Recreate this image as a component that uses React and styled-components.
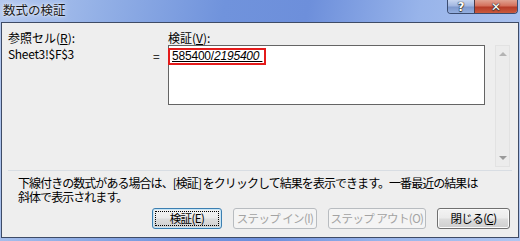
import React from "react";
import styled, { createGlobalStyle } from "styled-components";

const GlobalStyle = createGlobalStyle`
  html, body {
    margin: 0;
    padding: 0;
    width: 520px;
    height: 241px;
    overflow: hidden;
    background: #7f9fd9;
  }
  * { box-sizing: border-box; }
`;

const font = `"Noto Sans CJK JP", "Noto Sans", sans-serif`;

const Frame = styled.div`
  width: 520px;
  height: 241px;
  display: flex;
  flex-direction: column;
  padding: 0 1px 3px 1px;
  background: linear-gradient(100deg, #b3c8ef 0%, #93b0e6 18%, #7093dc 40%, #6d8fdb 55%, #98b4ea 75%, #b0c6f0 100%);
  font-family: ${font};
  font-size: 12px;
  color: #000;
`;

const TitleBar = styled.div`
  height: 22px;
  display: flex;
  align-items: flex-start;
  justify-content: space-between;
`;

const Title = styled.div`
  padding: 2px 0 0 2px;
  font-size: 12.5px;
  line-height: 16px;
  color: #1b1b1b;
  text-shadow: 0 0 6px rgba(255, 255, 255, 0.9), 0 0 2px rgba(255, 255, 255, 0.9);
`;

const Caption = styled.div`
  display: flex;
  margin-right: 1px;
  height: 14px;
  border: 1px solid #3b4c70;
  border-top: none;
  border-radius: 0 0 4px 4px;
  overflow: hidden;
`;

const CapButton = styled.div`
  width: ${p => p.$w}px;
  display: flex;
  align-items: center;
  justify-content: center;
  color: #fff;
  font-family: "DejaVu Sans", sans-serif;
  font-weight: bold;
  font-size: 12px;
  line-height: 1;
  text-shadow: 0 0 1px #222, 0 0 1px #222, 0 1px 1px #333;
  background: ${p => p.$red
    ? "linear-gradient(#e0a292 0%, #d4705c 45%, #b63b28 55%, #c95a3e 100%)"
    : "linear-gradient(#c8d6f0 0%, #a2b7e1 45%, #7f99cd 55%, #93afe0 100%)"};
  border-left: ${p => p.$red ? "1px solid #4a3a48" : "none"};
`;

const Client = styled.div`
  flex: 1;
  background: #eeeeee;
  border: 1px solid #3e4b66;
  display: flex;
  flex-direction: column;
`;

const Top = styled.div`
  display: flex;
  padding: 7px 0 0 6px;
  height: 147px;
`;

const Column = styled.div`
  width: ${p => p.$w}px;
  display: flex;
  flex-direction: column;
`;

const Label = styled.div`
  line-height: 15px;
  height: 15px;
  white-space: nowrap;
`;

const Key = styled.span`
  text-decoration: underline;
  text-underline-offset: 1px;
`;

const Ref = styled.div`
  padding-top: 2px;
  line-height: 13px;
  letter-spacing: -0.3px;
`;

const Eq = styled.div`
  padding-top: 4px;
  line-height: 13px;
`;

const Box = styled.div`
  height: 60px;
  background: #fff;
  border: 1px solid #646464;
`;

const Highlight = styled.div`
  display: inline-flex;
  margin: -1px 0 0 -1px;
  height: 17px;
  padding: 0 2px 0 2px;
  border: 2px solid #e41b1b;
  line-height: 13px;
  font-family: "Liberation Sans", sans-serif;
  font-size: 12px;
  letter-spacing: -0.2px;
  text-decoration: underline;
`;

const Italic = styled.span`
  font-style: italic;
  white-space: pre;
`;

const Scroll = styled.div`
  margin: 15px 0 0 10px;
  width: 15px;
  height: 122px;
  border: 1px solid #e2e2e2;
  background: #ececec;
  display: flex;
  flex-direction: column;
  justify-content: space-between;
  align-items: center;
  padding: 6px 0 6px;
`;

const Arrow = styled.div`
  width: 0;
  height: 0;
  border-left: 4px solid transparent;
  border-right: 4px solid transparent;
  ${p => p.$down ? "border-top: 4px solid #9a9a9a;" : "border-bottom: 4px solid #b4b4b4;"}
`;

const Separator = styled.div`
  margin: 0 6px 0 6px;
  height: 1px;
  background: #d8dde3;
`;

const Info = styled.div`
  padding: 5px 0 0 16px;
  line-height: 14px;
  letter-spacing: -0.95px;
  white-space: nowrap;
`;

const ButtonRow = styled.div`
  display: flex;
  gap: 11px;
  padding: 4px 0 0 150px;
`;

const Button = styled.div`
  width: ${p => p.$w}px;
  height: 21px;
  border-radius: 3px;
  display: flex;
  align-items: center;
  justify-content: center;
  line-height: 1;
  font-size: 11.5px;
  white-space: nowrap;
  letter-spacing: -0.6px;
  border: 1px solid ${p => p.$disabled ? "#b8bcc0" : p.$default ? "#3c7fb1" : "#707070"};
  color: ${p => p.$disabled ? "#a3a3a3" : "#000"};
  background: ${p => p.$disabled
    ? "#f4f4f4"
    : "linear-gradient(#f3f3f3 0%, #ebebeb 48%, #dddddd 52%, #cfcfcf 100%)"};
  box-shadow: ${p => p.$default ? "inset 0 0 0 1px #c7e5f6" : p.$disabled ? "none" : "inset 0 0 0 1px #fbfbfb"};
`;

const Focus = styled.span`
  display: flex;
  align-items: center;
  justify-content: center;
  width: calc(100% - 6px);
  height: calc(100% - 6px);
  outline: 1px dotted #000;
`;

export default function App() {
  return (
    <>
      <GlobalStyle />
      <Frame>
        <TitleBar>
          <Title>数式の検証</Title>
          <Caption>
            <CapButton $w={26}>?</CapButton>
            <CapButton $w={43} $red>✕</CapButton>
          </Caption>
        </TitleBar>
        <Client>
          <Top>
            <Column $w={145}>
              <Label>参照セル(<Key>R</Key>):</Label>
              <Ref>Sheet3!$F$3</Ref>
            </Column>
            <Column $w={15}>
              <Label />
              <Eq>=</Eq>
            </Column>
            <Column $w={317}>
              <Label>検証(<Key>V</Key>):</Label>
              <Box>
                <Highlight>
                  585400/<Italic>2195400 </Italic>
                </Highlight>
              </Box>
            </Column>
            <Scroll>
              <Arrow />
              <Arrow $down />
            </Scroll>
          </Top>
          <Separator />
          <Info>
            下線付きの数式がある場合は、[検証] をクリックして結果を表示できます。一番最近の結果は
            <br />
            斜体で表示されます。
          </Info>
          <ButtonRow>
            <Button $w={70} $default><Focus>検証(E)</Focus></Button>
            <Button $w={84} $disabled>ステップ イン(I)</Button>
            <Button $w={98} $disabled>ステップ アウト(O)</Button>
            <Button $w={73}>閉じる(<Key>C</Key>)</Button>
          </ButtonRow>
        </Client>
      </Frame>
    </>
  );
}
